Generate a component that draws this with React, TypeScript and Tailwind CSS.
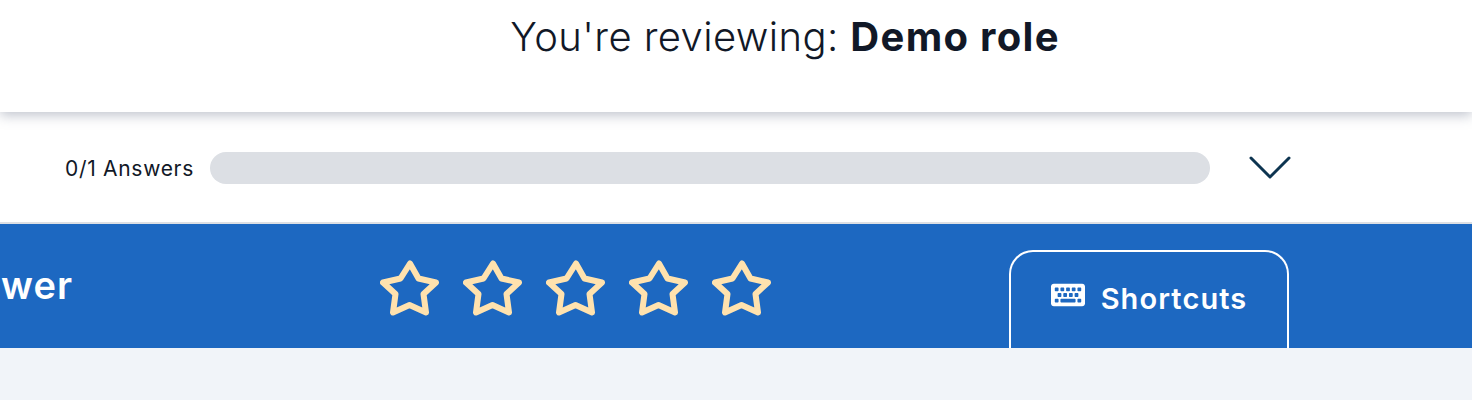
import { FaKeyboard } from "react-icons/fa";

const font = "font-['Inter','Liberation_Sans',sans-serif]";

function Star() {
  return (
    <svg width="60" height="60" viewBox="0 0 60 60" fill="none" stroke="#ffe2ae" strokeWidth="6" strokeLinejoin="round">
      <polygon points="30,5.5 38.5,20.5 56,24.5 43.5,36 46,54.5 29.5,47 13,54.5 15.5,36 3,24.5 20.5,20.5" />
    </svg>
  );
}

export default function App() {
  return (
    <div className={`${font} h-[400px] w-[1472px] overflow-hidden bg-[#f1f4f9]`}>
      <header className="relative z-10 flex h-[112px] justify-center bg-white pl-[98px] pt-[13px] shadow-[0_3px_12px_rgba(90,100,125,0.4)]">
        <h1 className="whitespace-nowrap text-[40px] font-[350] leading-[48px] tracking-[0.4px] text-[#111827]">
          You're reviewing: <span className="font-bold tracking-[1.3px]">Demo role</span>
        </h1>
      </header>

      <div className="flex h-[112px] items-center border-b-2 border-[#dcdfe4] bg-white pt-[2px]">
        <span className="ml-[65px] w-[145px] pt-[2px] text-[21px] tracking-[0.7px] text-[#111827]">0/1 Answers</span>
        <div className="h-8 w-[1000px] rounded-full bg-[#dcdfe4]" />
        <svg className="ml-[39px]" width="42" height="26" viewBox="0 0 42 26" fill="none" stroke="#0d3450" strokeWidth="3" strokeLinecap="round" strokeLinejoin="round">
          <polyline points="2,3 21,22 40,3" />
        </svg>
      </div>

      <div className="flex h-[124px] bg-[#1d68c1] text-white">
        <div className="flex h-full w-[73px] shrink-0 items-center justify-end overflow-hidden">
          <span className="mb-[2px] whitespace-nowrap text-[38px] font-semibold tracking-[1px]">Answer</span>
        </div>
        <div className="ml-[307px] flex gap-[23px] pt-[34px]">
          <Star />
          <Star />
          <Star />
          <Star />
          <Star />
        </div>
        <div className="ml-[237px] mt-[26px] flex h-[98px] w-[280px] items-start justify-center gap-4 rounded-t-[24px] border-2 border-b-0 border-white pt-[28px]">
          <FaKeyboard className="mt-[-2px] text-[34px]" />
          <span className="text-[29px] font-semibold leading-[38px] tracking-[1.1px]">Shortcuts</span>
        </div>
      </div>
    </div>
  );
}
